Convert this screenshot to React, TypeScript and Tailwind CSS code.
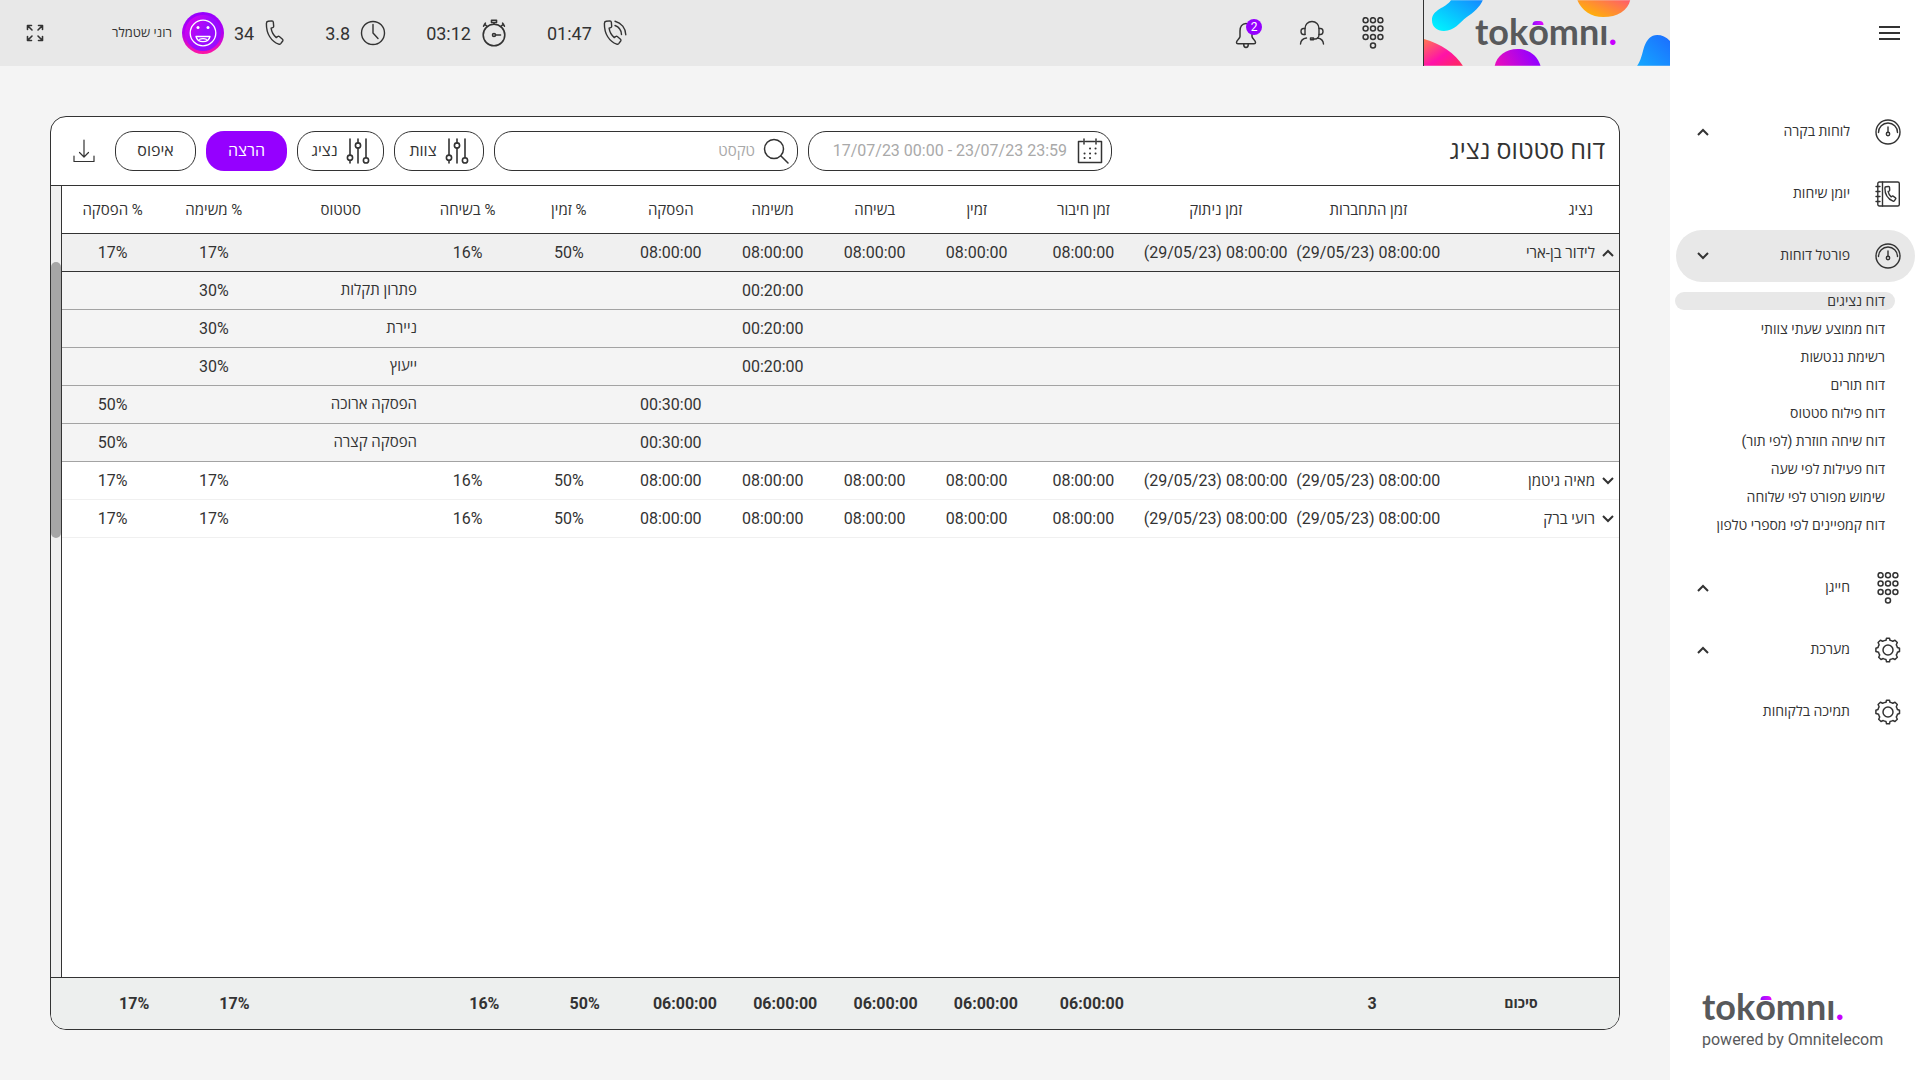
import React, { useState } from "react";

type IconProps = { className?: string };

function Svg({ className, box, children, w = 1.4 }: { className?: string; box: string; children: React.ReactNode; w?: number }) {
  return (
    <svg className={className} viewBox={box} fill="none" stroke="currentColor" strokeWidth={w} strokeLinecap="round" strokeLinejoin="round" aria-hidden="true">
      {children}
    </svg>
  );
}

const HANDSET =
  "M4.2 1.2 8 .9c.8 0 1.2.5 1.3 1.2l.4 4.2c0 .7-.4 1.2-1 1.4l-1.6.5c.5 3.700 2.300 7 5.200 9.400l1.400-1.100c.5-.4 1.100-.4 1.600 0l3.200 2.700c.6.500.6 1.200.2 1.800l-2 2.600c-.5.6-1.200.8-2 .5C7.400 21.500 2.200 14 2.400 3.400c0-1.200.7-2.100 1.800-2.200Z";

function Handset({ className }: IconProps) {
  return (
    <Svg className={className} box="0 0 21 26">
      <path d={HANDSET} />
    </Svg>
  );
}

function RingingPhone({ className }: IconProps) {
  return (
    <Svg className={className} box="0 0 26 26">
      <path d={HANDSET} />
      <path d="M13 5.500a10 10 0 0 1 6.500 9M13 1.200a14 14 0 0 1 10.800 13.600" />
    </Svg>
  );
}

function Stopwatch({ className }: IconProps) {
  return (
    <Svg className={className} box="0 0 26 28" w={1.6}>
      <circle cx="13" cy="16" r="10.800" />
      <path d="M10.500 1.200h5v2.300h-5zM13 3.500V5M3.500 5.200l2.800 2.300M22.500 5.200l-2.800 2.300M2.600 7.200l1.800-3M23.400 7.200l-1.800-3M14.500 16h5" />
      <circle cx="13" cy="16" r="1.500" />
    </Svg>
  );
}

function Clock({ className }: IconProps) {
  return (
    <Svg className={className} box="0 0 26 26">
      <circle cx="13" cy="13" r="11.500" />
      <path d="M13 4.500V13l5 5.500" />
    </Svg>
  );
}

function Keypad({ className }: IconProps) {
  const dots: [number, number][] = [];
  for (let r = 0; r < 3; r++) for (let c = 0; c < 3; c++) dots.push([3.200 + c * 7.400, 3.200 + r * 8.400]);
  dots.push([10.600, 28.400]);
  return (
    <Svg className={className} box="0 0 21.200 32" w={1.500}>
      {dots.map(([x, y]) => (
        <circle key={`${x}-${y}`} cx={x} cy={y} r="2.500" />
      ))}
    </Svg>
  );
}

function Agent({ className }: IconProps) {
  return (
    <Svg className={className} box="0 0 26 26" w={1.400}>
      <path d="M6 14.500V8.500C6 4.500 9 1.500 13 1.500s7 3 7 7v6c0 2.500-1.800 4.500-4 4.500h-2" />
      <path d="M6 8.500H4.500C3 8.500 2 9.700 2 11.500S3 14.500 4.500 14.500H6M20 8.500h1.500c1.500 0 2.500 1.200 2.500 3s-1 3-2.500 3H20M1.500 24c.3-3.500 2.500-5.500 6-6M24.500 24c-.3-3.500-2.500-5.500-6-6" />
      <path d="M11.500 18h3v1.800h-3z" />
    </Svg>
  );
}

function Bell({ className }: IconProps) {
  return (
    <Svg className={className} box="0 0 22 27" w={1.500}>
      <path d="M11 1.500C7 1.500 5 5 5 9v5.500c0 2-3.500 3.500-3.500 6 0 1 .5 1.300 1.500 1.300h16c1 0 1.500-.3 1.500-1.300 0-2.500-3.500-4-3.500-6V9c0-4-2-7.500-6-7.500ZM8.700 22c0 2 .8 3.600 2.300 3.600s2.300-1.600 2.300-3.600" />
    </Svg>
  );
}

function Gauge({ className }: IconProps) {
  return (
    <Svg className={className} box="0 0 26 26" w={1.400}>
      <circle cx="13" cy="13" r="12" />
      <path d="M3.500 13.500a9.500 9.500 0 1 1 19 0M13 8v5.500" />
      <circle cx="13" cy="15" r="1.700" />
    </Svg>
  );
}

function Directory({ className }: IconProps) {
  return (
    <Svg className={className} box="0 0 26 26" w={1.400}>
      <rect x="2.800" y="1" width="21.500" height="24" rx="1.500" />
      <path d="M7.500 1v24M1 5.500h4M1 10.500h4M1 15.500h4M1 20.500h4" />
      <path d="m11 5.800 2.600-.3c.5 0 .9.300.9.800l.2 2.800c0 .5-.2.800-.6 1l-1 .3c.4 2.200 1.400 4 3.100 5.500l.9-.7c.3-.2.700-.2 1 0l2.400 1.600c.4.300.5.700.2 1.100l-1.400 2c-.3.400-.8.500-1.300.3-5.200-2.200-8.200-6.800-8.100-13.100 0-.7.400-1.200 1.100-1.300Z" />
    </Svg>
  );
}

function Gear({ className }: IconProps) {
  return (
    <Svg className={className} box="0 0 26 26" w={1.500}>
      <circle cx="13" cy="13" r="5" />
      <path d="M11 3.200 11.500 1.200h3l.5 2c1.200.2 1.900.6 2.800 1.100l2.200-1 2.300 2.200-1 2.300c.6.900.9 1.600 1.100 2.700l2.100.8v3.200l-2.100.8c-.2 1.100-.5 1.800-1.100 2.700l1 2.300-2.300 2.200-2.200-1c-.9.600-1.600.9-2.800 1.100l-.5 2.200h-3l-.5-2.200c-1.200-.2-1.900-.5-2.800-1.100l-2.200 1-2.300-2.200 1-2.300c-.6-.9-.9-1.600-1.100-2.700L.9 14.500v-3.200l2.100-.8c.2-1.100.5-1.800 1.100-2.700l-1-2.300 2.300-2.200 2.200 1c.9-.5 1.600-.9 3.400-1.100Z" />
    </Svg>
  );
}

function Chevron({ up, className }: { up: boolean; className?: string }) {
  return (
    <svg className={className} viewBox="0 0 12 8" fill="none" stroke="currentColor" strokeWidth="2" aria-hidden="true">
      <path d={up ? "M1 7l5-5 5 5" : "M1 1l5 5 5-5"} />
    </svg>
  );
}

function Sliders({ className }: IconProps) {
  return (
    <Svg className={className} box="0 0 24 26" w={1.600}>
      <path d="M4 1v16M4 22.500V25M12 1v4M12 10v15M20 1v19" />
      <circle cx="4" cy="19.700" r="2.600" />
      <circle cx="12" cy="7.500" r="2.600" />
      <circle cx="20" cy="22.400" r="2.600" />
    </Svg>
  );
}

function CalendarIcon({ className }: IconProps) {
  return (
    <Svg className={className} box="0 0 26 26" w={1.500}>
      <path d="M5.500 3.500H1.500V24.500h23V3.500h-4M8.500 3.500h9M7 1v5M19 1v5" />
      <path strokeWidth="2" d="M13 10.500h.1M18.500 10.500h.1M7.500 15.500h.1M13 15.500h.1M18.500 15.500h.1M7.500 20h.1M13 20h.1" />
    </Svg>
  );
}

function SearchIcon({ className }: IconProps) {
  return (
    <Svg className={className} box="0 0 26 26" w={1.500}>
      <circle cx="11" cy="11" r="9.500" />
      <path d="m18 18 7 7" />
    </Svg>
  );
}

function Download({ className }: IconProps) {
  return (
    <Svg className={className} box="0 0 22 24" w={1.200}>
      <path d="M11 1v17M6.500 13.500 11 18l4.500-4.500M1 17v5.500h20V17" />
    </Svg>
  );
}

function Expand({ className }: IconProps) {
  return (
    <Svg className={className} box="0 0 18 18" w={1.600}>
      <path d="M1.500 5.500v-4h4M1.500 1.500l4.500 4.500M12.500 1.500h4v4M16.500 1.500 12 6M1.500 12.500v4h4M1.500 16.500 6 12M16.500 12.500v4h-4M16.500 16.500 12 12" />
    </Svg>
  );
}

function Smiley({ className }: IconProps) {
  return (
    <svg className={className} viewBox="0 0 42 42" aria-hidden="true">
      <defs>
        <linearGradient id="face" x1="0" y1="0" x2="1" y2="0.600">
          <stop offset="0" stopColor="#e400e8" />
          <stop offset="0.600" stopColor="#9a0cff" />
        </linearGradient>
        <linearGradient id="ring" x1="0" y1="0" x2="0" y2="1">
          <stop offset="0" stopColor="#9500ff" />
          <stop offset="0.500" stopColor="#b400f0" />
          <stop offset="1" stopColor="#ff17a2" />
        </linearGradient>
      </defs>
      <circle cx="21" cy="21" r="21" fill="url(#ring)" />
      <circle cx="21" cy="21" r="18" fill="url(#face)" />
      <g stroke="#fff" strokeWidth="1.300" fill="none" strokeLinejoin="round">
        <circle cx="21" cy="21" r="12.800" />
        <path d="M14 24.500h14c-.8 3.300-3.600 5.200-7 5.200s-6.200-1.900-7-5.200Z" />
        <path d="M17 27.500c2.500-1 5.500-1 8 0" />
      </g>
      <circle cx="16" cy="15.500" r="1.500" fill="#fff" />
      <circle cx="26" cy="15.500" r="1.500" fill="#fff" />
    </svg>
  );
}

function Wordmark() {
  return (
    <span dir="ltr" className="flex font-['Lato'] text-[36px] leading-9 font-bold text-[#58595b]">
      <span>tok</span>
      <span className="relative">
        o
        <span className="absolute top-2 left-1/2 h-1 w-[11px] -translate-x-1/2 rounded-t-full bg-linear-to-r from-[#9500ff] to-[#e400ff]" />
      </span>
      <span>mnı</span>
      <span className="text-[#c800ff]">.</span>
    </span>
  );
}

function BrandBanner() {
  return (
    <div className="relative flex h-full w-[247px] items-center justify-center overflow-hidden border-l border-[#333]">
      <svg className="absolute inset-0 h-full w-full" viewBox="0 0 247 66" aria-hidden="true">
        <defs>
          <linearGradient id="cyan" x1="0" y1="1" x2="1" y2="0">
            <stop offset="0.100" stopColor="#00f0ff" />
            <stop offset="1" stopColor="#1488ff" />
          </linearGradient>
          <linearGradient id="orange" x1="0" y1="0.700" x2="1" y2="0">
            <stop offset="0" stopColor="#ffb800" />
            <stop offset="1" stopColor="#ff5a6e" />
          </linearGradient>
          <linearGradient id="pink" x1="0" y1="0" x2="1" y2="1">
            <stop offset="0" stopColor="#ff7a50" />
            <stop offset="0.550" stopColor="#ff12a8" />
            <stop offset="1" stopColor="#ff2a5a" />
          </linearGradient>
          <linearGradient id="purple" x1="0" y1="0.500" x2="1" y2="0.300">
            <stop offset="0" stopColor="#e40cc0" />
            <stop offset="0.850" stopColor="#9500ff" />
          </linearGradient>
          <linearGradient id="blue" x1="0" y1="1" x2="1" y2="0">
            <stop offset="0" stopColor="#14a8ff" />
            <stop offset="1" stopColor="#1c6cff" />
          </linearGradient>
        </defs>
        <path fill="url(#cyan)" d="M27 0C22 8 8 9 8 20c0 7 5 11 12 11 11 0 15-8 23-14C50 12 56 7 59 0Z" />
        <path fill="url(#orange)" d="M154 0c4 10 14 17 26 17 14 0 25-7 27-17Z" />
        <path fill="url(#pink)" d="M0 39c17 5 31 14 39 27H0Z" />
        <path fill="url(#purple)" d="M71 66c2-10 11-17 23-17s20 7 23 17Z" />
        <path fill="url(#blue)" d="M214 66c4-6 5-12 7-19 3-8 7-12 13-12 5 0 9 2 13 6v25Z" />
      </svg>
      <div className="relative pb-1 pr-0.5">
        <Wordmark />
      </div>
    </div>
  );
}

function Stat({ value, children }: { value: string; children: React.ReactNode }) {
  return (
    <div className="flex items-center gap-2.5">
      {children}
      <span dir="ltr" className="text-[18px]">{value}</span>
    </div>
  );
}

function TopBar() {
  return (
    <header className="flex h-[66px] items-center bg-[#e8e8e8]">
      <BrandBanner />
      <div className="flex items-center gap-9 pr-[38px]">
        <button aria-label="לוח חיוג"><Keypad className="h-8 w-6" /></button>
        <button aria-label="נציגים"><Agent className="size-[26px]" /></button>
        <button aria-label="התראות" className="relative mt-1 mr-1.5">
          <Bell className="h-[27px] w-[22px]" />
          <span className="absolute -top-[3px] -right-[5px] flex size-4 items-center justify-center rounded-full bg-[#9500ff] text-[12px] text-white">2</span>
        </button>
      </div>
      <div className="mr-auto flex items-center">
        <div className="flex items-center gap-10">
          <Stat value="01:47"><RingingPhone className="size-[26px]" /></Stat>
          <Stat value="03:12"><Stopwatch className="h-7 w-[26px]" /></Stat>
          <Stat value="3.8"><Clock className="size-[26px]" /></Stat>
          <Stat value="34"><Handset className="h-[26px] w-[21px]" /></Stat>
        </div>
        <div className="mr-2.5 ml-[68px] flex items-center gap-2.5">
          <Smiley className="size-[42px]" />
          <span className="text-[13px]">רוני שטמלר</span>
        </div>
        <button aria-label="מסך מלא" className="ml-[26px]"><Expand className="size-[18px]" /></button>
      </div>
    </header>
  );
}

const REPORTS = [
  "דוח נציגים",
  "דוח ממוצע שעתי צוותי",
  "רשימת ננטשות",
  "דוח תורים",
  "דוח פילוח סטטוס",
  "דוח שיחה חוזרת (לפי תור)",
  "דוח פעילות לפי שעה",
  "שימוש מפורט לפי שלוחה",
  "דוח קמפיינים לפי מספרי טלפון",
];

function NavItem({ label, icon, chevron, active }: { label: string; icon: React.ReactNode; chevron?: "up" | "down"; active?: boolean }) {
  return (
    <a
      href="#"
      className={`mr-[5px] ml-1.5 flex h-[52px] items-center rounded-full pr-[11px] pl-[21px] text-[14px] ${active ? "bg-[#e8e8e8]" : ""}`}
    >
      <span className="flex w-8 justify-center">{icon}</span>
      <span className="mr-[22px] pb-0.5">{label}</span>
      {chevron && <Chevron up={chevron === "up"} className="mr-auto h-2 w-3" />}
    </a>
  );
}

function Sidebar() {
  return (
    <aside className="flex w-[250px] shrink-0 flex-col bg-white">
      <div className="flex h-[66px] items-center px-5">
        <button aria-label="תפריט" className="flex w-[21px] flex-col gap-1">
          <span className="h-0.5 bg-[#333]" />
          <span className="h-0.5 bg-[#333]" />
          <span className="h-0.5 bg-[#333]" />
        </button>
      </div>
      <nav className="flex flex-col gap-2.5 pt-10">
        <NavItem label="לוחות בקרה" chevron="up" icon={<Gauge className="size-[26px]" />} />
        <NavItem label="יומן שיחות" icon={<Directory className="size-[26px]" />} />
        <NavItem label="פורטל דוחות" chevron="down" active icon={<Gauge className="size-[26px]" />} />
        <ul className="mb-[18px] flex flex-col gap-2.5">
          {REPORTS.map((r, i) => (
            <li key={r}>
              <a href="#" className={`mr-[25px] ml-[5px] block rounded-full pr-2.5 text-[14px] leading-[18px] ${i === 0 ? "bg-[#e8e8e8]" : ""}`}>
                {r}
              </a>
            </li>
          ))}
        </ul>
        <NavItem label="חייגן" chevron="up" icon={<Keypad className="h-8 w-[22px]" />} />
        <NavItem label="מערכת" chevron="up" icon={<Gear className="size-[26px]" />} />
        <NavItem label="תמיכה בלקוחות" icon={<Gear className="size-[26px]" />} />
      </nav>
      <div dir="ltr" className="mt-auto flex flex-col gap-1 pb-7 pl-8 text-[#58595b]">
        <Wordmark />
        <p className="text-[16px] leading-6">powered by Omnitelecom</p>
      </div>
    </aside>
  );
}

const HEADINGS = ["נציג", "זמן התחברות", "זמן ניתוק", "זמן חיבור", "זמין", "בשיחה", "משימה", "הפסקה", "% זמין", "% בשיחה", "סטטוס", "% משימה", "% הפסקה"];
const STAMP = "(29/05/23) 08:00:00";
const T = "08:00:00";
const AGENT_CELLS = [STAMP, STAMP, T, T, T, T, T, "50%", "16%", "", "17%", "17%"];
const AGENTS = ["לידור בן-ארי", "מאיה גיטמן", "רועי ברק"];
const BREAKDOWN = [
  { status: "פתרון תקלות", task: "00:20:00", taskPct: "30%" },
  { status: "ניירת", task: "00:20:00", taskPct: "30%" },
  { status: "ייעוץ", task: "00:20:00", taskPct: "30%" },
  { status: "הפסקה ארוכה", pause: "00:30:00", pausePct: "50%" },
  { status: "הפסקה קצרה", pause: "00:30:00", pausePct: "50%" },
];
const TOTALS = ["סיכום", "3", "", "06:00:00", "06:00:00", "06:00:00", "06:00:00", "06:00:00", "50%", "16%", "", "17%", "17%"];

function ReportTable() {
  const [open, setOpen] = useState(0);
  return (
    <table className="w-full table-fixed border-collapse text-center text-[16px]">
      <colgroup>
        <col />
        <col className="w-[9.8%]" />
        <col className="w-[9.8%]" />
        <col className="w-[7.2%]" />
        <col className="w-[6.5%]" />
        <col className="w-[6.6%]" />
        <col className="w-[6.5%]" />
        <col className="w-[6.6%]" />
        <col className="w-[6.5%]" />
        <col className="w-[6.5%]" />
        <col className="w-[9.8%]" />
        <col className="w-[6.5%]" />
        <col className="w-[6.5%]" />
      </colgroup>
      <thead>
        <tr className="h-[47px] border-b border-[#333] text-[15px]">
          {HEADINGS.map((h, i) => (
            <th key={h} scope="col" className={`pt-0.5 font-normal ${i === 0 ? "pr-[26px] text-right" : ""}`}>{h}</th>
          ))}
        </tr>
      </thead>
      <tbody>
        {AGENTS.map((name, row) => (
          <React.Fragment key={name}>
            <tr className={`h-[38px] border-b ${open === row ? "border-[#333] bg-[#f0f0f0]" : "border-[#f0f0f0]"}`}>
              <td className="pt-0.5 pr-[5px] text-right">
                <button className="flex items-center gap-[7px] text-[15px]" aria-expanded={open === row} onClick={() => setOpen(open === row ? -1 : row)}>
                  <Chevron up={open === row} className="h-2 w-3" />
                  {name}
                </button>
              </td>
              {AGENT_CELLS.map((c, i) => (
                <td key={i} dir="ltr" className="pt-0.5 whitespace-nowrap">{c}</td>
              ))}
            </tr>
            {open === row &&
              BREAKDOWN.map((b) => (
                <tr key={b.status} className="h-[38px] border-b border-[#a3a3a3] bg-[#f4f4f4]">
                  <td colSpan={6} />
                  <td className="pt-0.5">{b.task}</td>
                  <td className="pt-0.5">{b.pause}</td>
                  <td colSpan={2} />
                  <td className="text-right text-[15px]">{b.status}</td>
                  <td dir="ltr" className="pt-0.5">{b.taskPct}</td>
                  <td dir="ltr" className="pt-0.5">{b.pausePct}</td>
                </tr>
              ))}
          </React.Fragment>
        ))}
      </tbody>
    </table>
  );
}

function TotalsTable() {
  return (
    <table className="w-full table-fixed text-center text-[16px] font-bold" aria-label="סיכום">
      <colgroup>
        <col className="w-[9.8%]" />
        <col className="w-[9.9%]" />
        <col className="w-[9.9%]" />
        <col className="w-[7.4%]" />
        <col />
        <col />
        <col />
        <col />
        <col />
        <col />
        <col className="w-[9.9%]" />
        <col />
        <col />
      </colgroup>
      <tbody>
        <tr className="h-[51px]">
          {TOTALS.map((t, i) => (
            <td key={i} dir={i === 0 ? "rtl" : "ltr"} className={i === 0 ? "text-[14px]" : ""}>{t}</td>
          ))}
        </tr>
      </tbody>
    </table>
  );
}

function Toolbar() {
  const pill = "flex h-10 items-center rounded-[18px] border border-[#333]";
  return (
    <div className="flex h-[69px] items-center gap-2.5 border-b border-[#333] pr-3.5 pl-[22px]">
      <h1 className="ml-auto text-[25px]">דוח סטטוס נציג</h1>
      <label className={`${pill} w-[304px] gap-2.5 px-2`}>
        <CalendarIcon className="size-[26px] shrink-0" />
        <input dir="ltr" aria-label="טווח תאריכים" defaultValue="17/07/23 00:00 - 23/07/23 23:59" className="w-full min-w-0 text-right text-[16px] text-[#a9a9a9] outline-none" />
      </label>
      <label className={`${pill} w-[304px] gap-2 px-2`}>
        <SearchIcon className="size-[26px] shrink-0" />
        <input aria-label="חיפוש" placeholder="טקסט" className="w-full min-w-0 text-[15px] outline-none placeholder:text-[#a9a9a9]" />
      </label>
      <button className={`${pill} w-[90px] justify-center gap-2 text-[16px]`}>
        <Sliders className="h-[26px] w-6" />
        צוות
      </button>
      <button className={`${pill} w-[87px] justify-center gap-2 text-[16px]`}>
        <Sliders className="h-[26px] w-6" />
        נציג
      </button>
      <button className="h-10 w-[81px] rounded-[18px] bg-[#9500ff] text-[16px] text-white">הרצה</button>
      <button className={`${pill} w-[81px] justify-center text-[16px]`}>איפוס</button>
      <button aria-label="הורדה" className="mr-2.5"><Download className="h-6 w-[22px]" /></button>
    </div>
  );
}

export default function App() {
  return (
    <div dir="rtl" className="flex min-h-screen bg-[#f4f4f4] font-['Roboto','Open_Sans',sans-serif] text-[#333]">
      <Sidebar />
      <div className="flex min-w-0 flex-1 flex-col">
        <TopBar />
        <main className="flex flex-1 flex-col px-[50px] pt-[50px] pb-[50px]">
          <section className="flex flex-1 flex-col overflow-hidden rounded-2xl border border-[#333] bg-white">
            <Toolbar />
            <div className="flex flex-1">
              <div className="min-w-0 flex-1">
                <ReportTable />
              </div>
              <div className="w-[11px] border-r border-[#333] bg-[#f0f0f0] pt-[76px]">
                <div className="h-[276px] rounded-full bg-[#a6a6a6]" />
              </div>
            </div>
            <div className="border-t border-[#333] bg-[#edefee] pr-6 pl-[33px]">
              <TotalsTable />
            </div>
          </section>
        </main>
      </div>
    </div>
  );
}
